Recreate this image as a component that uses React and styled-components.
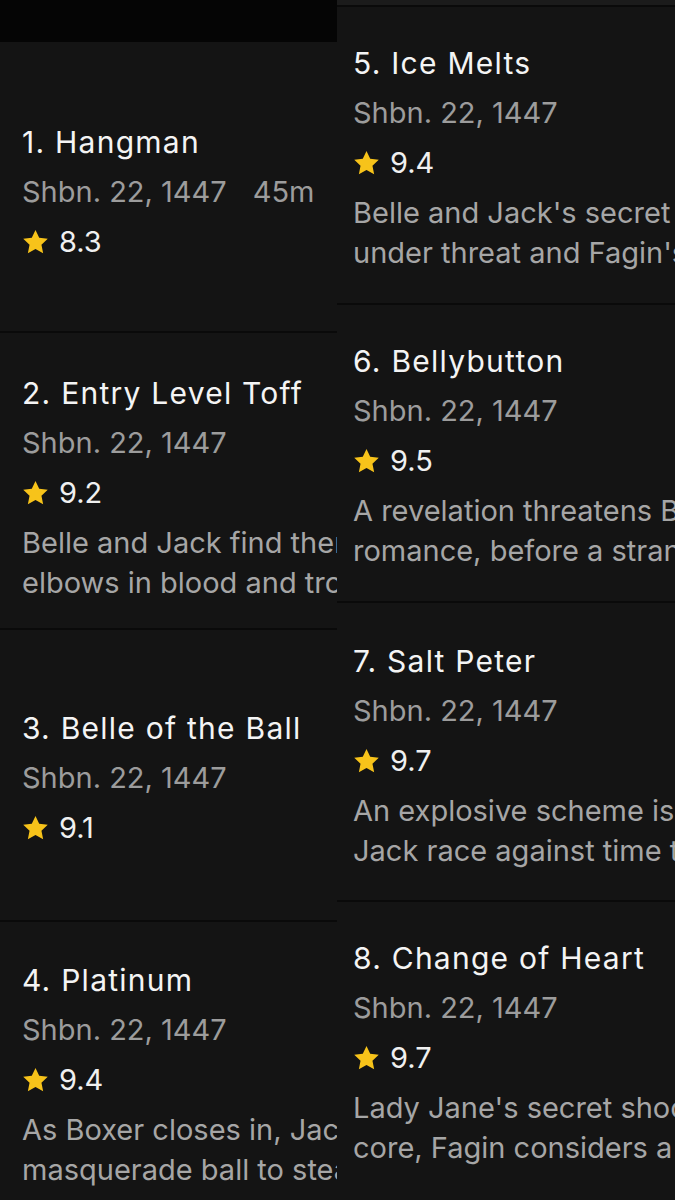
import React from "react";
import styled, { createGlobalStyle } from "styled-components";

const Global = createGlobalStyle`
  html, body { margin: 0; padding: 0; background: #141414; }
  body { font-family: Inter, "Noto Sans", sans-serif; -webkit-font-smoothing: antialiased; }
`;

const Page = styled.div`
  display: flex;
  width: 675px;
  height: 1200px;
  overflow: hidden;
  background: #141414;
`;

const Column = styled.div`
  display: flex;
  flex-direction: column;
  width: ${(p) => p.$width}px;
  flex: none;
  overflow: hidden;
`;

const TopBar = styled.div`
  height: ${(p) => p.$height}px;
  flex: none;
  background: ${(p) => p.$color};
  border-bottom: ${(p) => (p.$line ? "2px solid #0a0a0a" : "none")};
`;

const Card = styled.div`
  flex: none;
  height: ${(p) => p.$height}px;
  display: flex;
  flex-direction: column;
  justify-content: center;
  gap: 10px;
  padding-left: ${(p) => p.$pad}px;
  padding-top: ${(p) => p.$shift}px;
  box-sizing: border-box;
  border-bottom: 2px solid #0a0a0a;
  background: #141414;
  overflow: hidden;
  white-space: nowrap;
`;

const Title = styled.div`
  font-size: 30px;
  line-height: 40px;
  letter-spacing: 1.25px;
  color: #f4f4f4;
`;

const Meta = styled.div`
  display: flex;
  gap: 26px;
  font-size: 29px;
  line-height: 40px;
  color: #9c9c9c;
`;

const Rating = styled.div`
  display: flex;
  align-items: center;
  gap: 10px;
  font-size: 29px;
  line-height: 40px;
  color: #f0f0f0;
`;

const Desc = styled.div`
  font-size: 29px;
  line-height: 40px;
  color: #a6a6a6;
`;

const Line = styled.span`
  display: block;
`;

const Star = () => (
  <svg width="27" height="26" viewBox="0 0 24 23" aria-hidden="true">
    <path
      d="M12 0.8l3.3 7 7.6 0.9-5.6 5.2 1.5 7.6L12 17.7l-6.8 3.8 1.5-7.6L1.1 8.7l7.6-0.9z"
      fill="#f7c31a"
    />
  </svg>
);

const left = [
  { h: 291, s: 10, title: "1. Hangman", meta: ["Shbn. 22, 1447", "45m"], rating: "8.3" },
  {
    h: 297,
    s: 15,
    title: "2. Entry Level Toff",
    meta: ["Shbn. 22, 1447"],
    rating: "9.2",
    desc: ["Belle and Jack find themselves up to their", "elbows in blood and trouble."],
  },
  { h: 292, s: 6, title: "3. Belle of the Ball", meta: ["Shbn. 22, 1447"], rating: "9.1" },
  {
    h: 300,
    s: 8,
    title: "4. Platinum",
    meta: ["Shbn. 22, 1447"],
    rating: "9.4",
    desc: ["As Boxer closes in, Jack plans a daring", "masquerade ball to steal the jewels."],
  },
];

const right = [
  {
    h: 298,
    s: 6,
    title: "5. Ice Melts",
    meta: ["Shbn. 22, 1447"],
    rating: "9.4",
    desc: ["Belle and Jack's secret romance is", "under threat and Fagin's plans unravel."],
  },
  {
    h: 298,
    s: 5,
    title: "6. Bellybutton",
    meta: ["Shbn. 22, 1447"],
    rating: "9.5",
    desc: ["A revelation threatens Belle and Jack's", "romance, before a stranger arrives."],
  },
  {
    h: 299,
    s: 8,
    title: "7. Salt Peter",
    meta: ["Shbn. 22, 1447"],
    rating: "9.7",
    desc: ["An explosive scheme is set, as Belle and", "Jack race against time to stop it."],
  },
  {
    h: 300,
    s: 4,
    title: "8. Change of Heart",
    meta: ["Shbn. 22, 1447"],
    rating: "9.7",
    desc: ["Lady Jane's secret shocks Belle to her", "core, Fagin considers a new path."],
  },
];

const Episode = ({ ep, pad }) => (
  <Card $height={ep.h} $pad={pad} $shift={ep.s}>
    <Title>{ep.title}</Title>
    <Meta>
      {ep.meta.map((m) => (
        <span key={m}>{m}</span>
      ))}
    </Meta>
    <Rating>
      <Star />
      <span>{ep.rating}</span>
    </Rating>
    {ep.desc && (
      <Desc>
        {ep.desc.map((d) => (
          <Line key={d}>{d}</Line>
        ))}
      </Desc>
    )}
  </Card>
);

export default function App() {
  return (
    <>
      <Global />
      <Page>
        <Column $width={337}>
          <TopBar $height={42} $color="#050505" />
          {left.map((ep) => (
            <Episode key={ep.title} ep={ep} pad={22} />
          ))}
        </Column>
        <Column $width={338}>
          <TopBar $height={5} $color="#1b1b1b" $line />
          {right.map((ep) => (
            <Episode key={ep.title} ep={ep} pad={16} />
          ))}
        </Column>
      </Page>
    </>
  );
}
